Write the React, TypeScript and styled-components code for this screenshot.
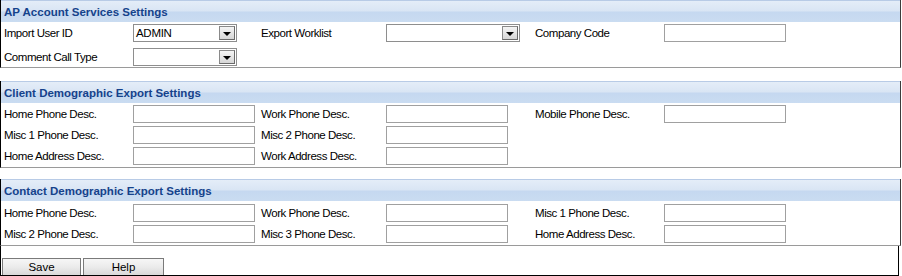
import styled, { createGlobalStyle } from "styled-components";

const GlobalStyle = createGlobalStyle`
  body {
    margin: 0;
    background: #ffffff;
    font-family: "Liberation Sans", Arial, sans-serif;
  }
`;

const Page = styled.div`
  width: 902px;
  height: 276px;
  overflow: hidden;
`;

const Section = styled.div<{ $gapBelow: number }>`
  width: 899px;
  border-left: 1px solid #000000;
  border-right: 1px solid #3c3c3c;
  border-bottom: 1px solid #9a9a9a;
  margin-bottom: ${(p) => p.$gapBelow}px;
`;

const Header = styled.div`
  height: 21px;
  line-height: 23px;
  padding-left: 3px;
  border-top: 1px solid #b8cbe6;
  background: linear-gradient(#e4edf8 0%, #d9e5f4 48%, #c5d8f0 52%, #cadcf1 100%);
  color: #15428b;
  font-weight: bold;
  font-size: 11.5px;
`;

const Grid = styled.div<{ $rowGap: number; $top: number; $bottom: number }>`
  display: grid;
  grid-template-columns: 129px 128px 125px 149px 129px 1fr;
  grid-auto-rows: 18px;
  row-gap: ${(p) => p.$rowGap}px;
  padding: ${(p) => p.$top}px 0 ${(p) => p.$bottom}px 3px;
  align-items: center;
`;

const Label = styled.div`
  font-size: 11.5px;
  letter-spacing: -0.45px;
  color: #000000;
  white-space: nowrap;
`;

const TextBox = styled.div`
  box-sizing: border-box;
  width: 122px;
  height: 18px;
  border: 1px solid #a0a0a0;
  background: #ffffff;
`;

const SelectBox = styled.div<{ $width: number }>`
  box-sizing: border-box;
  width: ${(p) => p.$width}px;
  height: 18px;
  border: 1px solid #8e8e8e;
  background: #ffffff;
  display: flex;
  align-items: center;
  justify-content: space-between;
  padding-left: 2px;
  font-size: 11.5px;
  letter-spacing: -0.3px;
`;

const DropButton = styled.div`
  box-sizing: border-box;
  width: 16px;
  height: 14px;
  margin-right: 1px;
  border: 1px solid #6a6a6a;
  border-top-color: #8a8a8a;
  border-left-color: #8a8a8a;
  background: linear-gradient(#f4f4f4, #d6d6d6);
  display: flex;
  align-items: center;
  justify-content: center;
  padding-top: 2px;
`;

const Empty = styled.div``;

const ButtonBar = styled.div`
  width: 899px;
  height: 30px;
  box-sizing: border-box;
  border-left: 1px solid #000000;
  border-right: 1px solid #000000;
  border-bottom: 1px solid #000000;
  padding: 12px 0 0 1px;
  display: flex;
  gap: 2px;
`;

const Button = styled.button<{ $width: number }>`
  width: ${(p) => p.$width}px;
  height: 17px;
  padding: 0;
  border: 1px solid #7a7a7a;
  border-bottom: none;
  background: linear-gradient(#f6f6f6 0%, #ebebeb 50%, #d9d9d9 100%);
  font-family: "Liberation Sans", Arial, sans-serif;
  font-size: 11.5px;
  color: #000000;
  line-height: 15px;
`;

const Arrow = () => (
  <svg width="8" height="4" viewBox="0 0 8 4">
    <polygon points="0,0 8,0 4,4" fill="#000" />
  </svg>
);

type Field =
  | { kind: "text"; label: string }
  | { kind: "select"; label: string; width: number; value?: string }
  | { kind: "none" };

interface ISection {
  title: string;
  rowGap: number;
  top: number;
  bottom: number;
  gapBelow: number;
  fields: Field[];
}

const sections: ISection[] = [
  {
    title: "AP Account Services Settings",
    rowGap: 6,
    top: 2,
    bottom: 1,
    gapBelow: 13,
    fields: [
      { kind: "select", label: "Import User ID", width: 104, value: "ADMIN" },
      { kind: "select", label: "Export Worklist", width: 134 },
      { kind: "text", label: "Company Code" },
      { kind: "select", label: "Comment Call Type", width: 104 },
    ],
  },
  {
    title: "Client Demographic Export Settings",
    rowGap: 3,
    top: 2,
    bottom: 2,
    gapBelow: 11,
    fields: [
      { kind: "text", label: "Home Phone Desc." },
      { kind: "text", label: "Work Phone Desc." },
      { kind: "text", label: "Mobile Phone Desc." },
      { kind: "text", label: "Misc 1 Phone Desc." },
      { kind: "text", label: "Misc 2 Phone Desc." },
      { kind: "none" },
      { kind: "text", label: "Home Address Desc." },
      { kind: "text", label: "Work Address Desc." },
    ],
  },
  {
    title: "Contact Demographic Export Settings",
    rowGap: 3,
    top: 3,
    bottom: 2,
    gapBelow: 0,
    fields: [
      { kind: "text", label: "Home Phone Desc." },
      { kind: "text", label: "Work Phone Desc." },
      { kind: "text", label: "Misc 1 Phone Desc." },
      { kind: "text", label: "Misc 2 Phone Desc." },
      { kind: "text", label: "Misc 3 Phone Desc." },
      { kind: "text", label: "Home Address Desc." },
    ],
  },
];

function renderField(field: Field, index: number) {
  if (field.kind === "none") {
    return [<Empty key={`l${index}`} />, <Empty key={`f${index}`} />];
  }
  return [
    <Label key={`l${index}`}>{field.label}</Label>,
    field.kind === "text" ? (
      <TextBox key={`f${index}`} />
    ) : (
      <SelectBox key={`f${index}`} $width={field.width}>
        <span>{field.value ?? ""}</span>
        <DropButton>
          <Arrow />
        </DropButton>
      </SelectBox>
    ),
  ];
}

function App() {
  return (
    <Page>
      <GlobalStyle />
      {sections.map((section) => (
        <Section key={section.title} $gapBelow={section.gapBelow}>
          <Header>{section.title}</Header>
          <Grid $rowGap={section.rowGap} $top={section.top} $bottom={section.bottom}>
            {section.fields.map((field, index) => renderField(field, index))}
          </Grid>
        </Section>
      ))}
      <ButtonBar>
        <Button $width={79}>Save</Button>
        <Button $width={81}>Help</Button>
      </ButtonBar>
    </Page>
  );
}

export default App;
